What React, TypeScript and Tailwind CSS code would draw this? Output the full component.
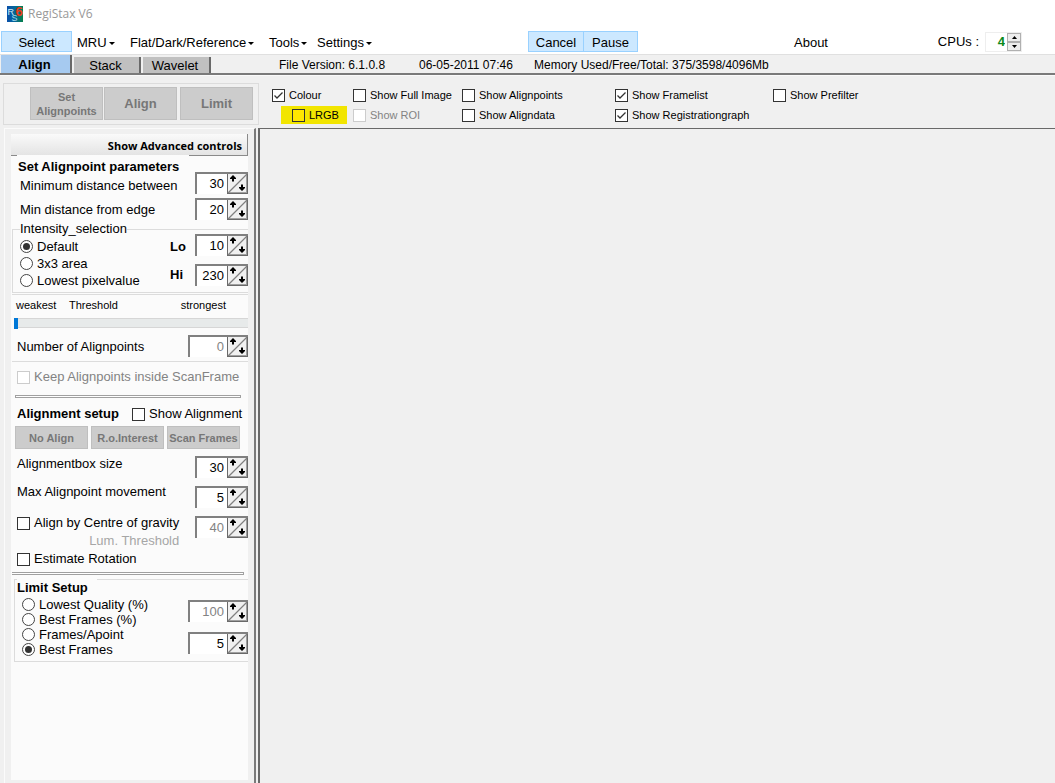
import React, { useId } from "react";

const cx = (...parts: (string | undefined | false)[]) => parts.filter(Boolean).join(" ");

function Logo() {
  return (
    <svg width="16" height="16" viewBox="0 0 16 16" aria-hidden="true">
      <defs>
        <linearGradient id="logo-bg" x1="0" x2="1" y1="0" y2="0">
          <stop offset="0" stopColor="#0a4fa8" />
          <stop offset="0.5" stopColor="#04689a" />
          <stop offset="1" stopColor="#068048" />
        </linearGradient>
      </defs>
      <rect width="16" height="16" fill="url(#logo-bg)" />
      <g fontFamily="Liberation Sans, sans-serif">
        <text x="0.5" y="9" fontSize="9" fill="#d6ecf5">R</text>
        <text x="4.5" y="15" fontSize="9" fill="#a9dcec">S</text>
        <text x="8.500" y="10" fontSize="13" fontWeight="bold" fill="#f03a18">6</text>
      </g>
    </svg>
  );
}

function Caret() {
  return (
    <svg width="6" height="3" viewBox="0 0 6 3" aria-hidden="true">
      <path d="M0 0h6L3 3z" fill="#000" />
    </svg>
  );
}

function MenuButton({ children, caret, className }: { children: React.ReactNode; caret?: boolean; className?: string }) {
  return (
    <button className={cx("flex h-5 shrink-0 items-center gap-[2px] whitespace-nowrap", className)}>
      {children}
      {caret && <Caret />}
    </button>
  );
}

function BlueButton({ children, className }: { children: React.ReactNode; className: string }) {
  return (
    <button className={cx("h-[21px] shrink-0 border border-[#99d1ff] bg-[#cce8ff] pt-[2px]", className)}>{children}</button>
  );
}

type CheckProps = {
  label: string;
  checked?: boolean;
  disabled?: boolean;
  yellow?: boolean;
  className?: string;
};

function Check({ label, checked, disabled, yellow, className }: CheckProps) {
  return (
    <label className={cx("flex items-center gap-1 whitespace-nowrap", disabled && "text-[#838383]", className)}>
      <span className="grid shrink-0">
        <input
          type="checkbox"
          defaultChecked={checked}
          disabled={disabled}
          className={cx(
            "peer col-start-1 row-start-1 size-[13px] appearance-none border",
            disabled ? "border-[#cccccc]" : "border-[#333333]",
            yellow ? "bg-[#ffe600]" : "bg-white",
          )}
        />
        <svg
          className="pointer-events-none col-start-1 row-start-1 hidden peer-checked:block"
          width="13"
          height="13"
          viewBox="0 0 13 13"
          aria-hidden="true"
        >
          <path d="M2.500 6.500L5 9L10.500 3.500" fill="none" stroke="#333" strokeWidth="1.300" />
        </svg>
      </span>
      {label}
    </label>
  );
}

function Radio({ name, label, checked, className }: { name: string; label: string; checked?: boolean; className: string }) {
  return (
    <label className={cx("flex items-center gap-1 whitespace-nowrap", className)}>
      <input
        type="radio"
        name={name}
        defaultChecked={checked}
        className="grid size-[13px] shrink-0 appearance-none place-items-center rounded-full border border-[#444444] bg-white before:hidden before:size-[7px] before:rounded-full before:bg-[#333333] checked:before:block"
      />
      {label}
    </label>
  );
}

type SpinProps = { id?: string; label?: string; value: number; disabled?: boolean; wide?: boolean };

function Spin({ id, label, value, disabled, wide }: SpinProps) {
  return (
    <span
      className={cx(
        "flex h-[22px] shrink-0 border-t-2 border-l-2 border-[#808080] bg-white",
        wide ? "w-[60px]" : "w-[53px]",
      )}
    >
      <input
        id={id}
        aria-label={label}
        type="text"
        defaultValue={value}
        disabled={disabled}
        className={cx("h-[18px] w-0 min-w-0 flex-1 bg-white pr-[3px] text-right outline-none", disabled ? "text-[#838383]" : "text-black")}
      />
      <span className="relative flex h-5 w-[21px] shrink-0 bg-[#f0f0f0]">
        <svg className="pointer-events-none absolute inset-0" width="21" height="20" viewBox="0 0 21 20" aria-hidden="true">
          <path d="M0.500 0V20" stroke="#696969" />
          <path d="M19.500 0V19M1 18.500H20" stroke="#a0a0a0" />
          <path d="M20.500 0V20M1 19.500H21" stroke="#696969" />
          <path d="M1 19L20 0" stroke="#808080" strokeWidth="1.200" />
          <path d="M6 1L9 4V5H7V7.500H5V5H3V4z" fill="#000" />
          <path d="M15 17L18 14V13H16V10.500H14V13H12V14z" fill="#000" />
        </svg>
        <button aria-label="Increase" className="flex-1" />
        <button aria-label="Decrease" className="flex-1" />
      </span>
    </span>
  );
}

function SpinRow({ label, value, className, labelClass }: { label: string; value: number; className: string; labelClass?: string }) {
  const id = useId();
  return (
    <div className={cx("flex items-start justify-between", className)}>
      <label htmlFor={id} className={cx("whitespace-nowrap leading-4", labelClass)}>
        {label}
      </label>
      <Spin id={id} value={value} />
    </div>
  );
}

function GreyButton({ children, className }: { children: React.ReactNode; className: string }) {
  return (
    <button disabled className={cx("shrink-0 whitespace-nowrap border border-[#bfbfbf] bg-[#cccccc] font-bold text-[#777777]", className)}>
      {children}
    </button>
  );
}

function DoubleRule({ className }: { className: string }) {
  return <div className={cx("h-[3px] border-y border-r border-[#a0a0a0] bg-white", className)} />;
}

function TopBar() {
  return (
    <header className="bg-white">
      <div className="flex h-[29px] items-center gap-[5px] pb-[2px] pl-[7px] font-['Open_Sans',sans-serif] text-[12px] text-[#999999]">
        <Logo />
        <h1>RegiStax V6</h1>
      </div>
      <nav className="flex h-[26px] items-start border-b border-[#e0e0e0] pl-px pt-[2px]">
        <BlueButton className="w-[71px]">Select</BlueButton>
        <div className="flex w-[456px] shrink-0 pl-[5px] pt-[2px]">
          <MenuButton caret className="w-[53px]">MRU</MenuButton>
          <MenuButton caret className="w-[139px]">Flat/Dark/Reference</MenuButton>
          <MenuButton caret className="w-[48px]">Tools</MenuButton>
          <MenuButton caret>Settings</MenuButton>
        </div>
        <BlueButton className="w-14">Cancel</BlueButton>
        <BlueButton className="-ml-px w-[55px]">Pause</BlueButton>
        <MenuButton className="ml-[156px] mt-[2px]">About</MenuButton>
        <div className="ml-auto mr-[33px] mt-px flex shrink-0 items-center gap-[6px]">
          <label htmlFor="cpus">CPUs :</label>
          <span className="flex h-5 w-[37px] border border-[#eeeeee] bg-white">
            <input id="cpus" type="text" defaultValue="4" className="w-0 flex-1 pr-[2px] text-right font-bold text-[#0a8a1a] outline-none" />
            <span className="flex w-[14px] flex-col">
              <button aria-label="More CPUs" className="grid flex-1 place-items-center border border-[#b0b0b0] bg-[#eeeeee]">
                <svg width="5" height="3" viewBox="0 0 5 3"><path d="M0 3h5L2.500 0z" /></svg>
              </button>
              <button aria-label="Fewer CPUs" className="grid flex-1 place-items-center border border-[#b0b0b0] bg-[#eeeeee]">
                <svg width="5" height="3" viewBox="0 0 5 3"><path d="M0 0h5L2.500 3z" /></svg>
              </button>
            </span>
          </span>
        </div>
      </nav>
    </header>
  );
}

function TabStrip() {
  return (
    <div className="flex h-5 items-end gap-[2px] border-b-2 border-[#7a7a7a] pl-px">
      <button className="h-[18px] w-[71px] shrink-0 border-r-2 border-[#696969] bg-[#a6caf0] pr-[2px] pt-px font-bold">Align</button>
      <button className="h-4 w-[67px] shrink-0 border-r-2 border-[#696969] bg-[#c0c0c0] pr-[2px] pt-[2px] leading-[14px]">Stack</button>
      <button className="h-4 w-[68px] shrink-0 border-r-2 border-[#696969] bg-[#c0c0c0] pr-[2px] pt-[2px] leading-[14px]">Wavelet</button>
      <div className="flex h-4 items-center whitespace-nowrap pl-[66px] text-xs">
        <span className="w-[140px]">File Version: 6.1.0.8</span>
        <span className="w-[115px]">06-05-2011 07:46</span>
        <span>Memory Used/Free/Total: 375/3598/4096Mb</span>
      </div>
    </div>
  );
}

function Toolbar() {
  return (
    <div className="flex h-[53px] items-start border-t border-[#fafafa] pl-[3px]">
      <div className="mt-[7px] flex h-[42px] w-[256px] shrink-0 items-start border border-[#dcdcdc] pl-[26px] pt-[3px]">
        <GreyButton className="h-[33px] w-[73px] text-[11px] leading-[14px]">
          Set
          <br />
          Alignpoints
        </GreyButton>
        <GreyButton className="ml-px h-[33px] w-[73px]">Align</GreyButton>
        <GreyButton className="ml-[3px] h-[33px] w-[73px]">Limit</GreyButton>
      </div>
      <div className="ml-[13px] mt-[9px] grid grid-cols-[81px_109px_153px_158px_auto] grid-rows-[20px_20px] items-center text-[11px]">
        <Check label="Colour" checked />
        <Check label="Show Full Image" />
        <Check label="Show Alignpoints" />
        <Check label="Show Framelist" checked />
        <Check label="Show Prefilter" />
        <Check label="LRGB" yellow className="ml-[9px] h-[18px] w-[66px] bg-[#f2e500] pl-[11px]" />
        <Check label="Show ROI" disabled />
        <Check label="Show Aligndata" />
        <Check label="Show Registrationgraph" checked />
      </div>
    </div>
  );
}

function IntensityGroup() {
  return (
    <fieldset className="ml-px h-[72px] border border-r-0 border-[#dcdcdc] pl-[7px]">
      <legend className="leading-4">Intensity_selection</legend>
      <div className="-mt-[3px] flex justify-between">
        <div className="pt-[4px]">
          <Radio name="intensity" label="Default" checked className="h-[17px]" />
          <Radio name="intensity" label="3x3 area" className="h-[17px]" />
          <Radio name="intensity" label="Lowest pixelvalue" className="h-[17px]" />
        </div>
        <div className="w-[78px]">
          <SpinRow label="Lo" value={10} labelClass="pt-[5px] font-bold" className="h-[30px]" />
          <SpinRow label="Hi" value={230} labelClass="pt-[3px] font-bold" className="h-[22px]" />
        </div>
      </div>
    </fieldset>
  );
}

function LimitGroup() {
  return (
    <fieldset className="ml-[3px] mt-[4px] h-[83px] border border-r-0 border-[#dcdcdc]">
      <legend className="float-left -mt-px ml-[2px] w-[80px] bg-[#fbfbfb] pt-px font-bold leading-4">Limit Setup</legend>
      <div className="clear-left flex justify-between pl-[7px]">
        <div className="pt-px">
          <Radio name="limit" label="Lowest Quality (%)" className="h-[15px]" />
          <Radio name="limit" label="Best Frames (%)" className="h-[15px]" />
          <Radio name="limit" label="Frames/Apoint" className="h-[15px]" />
          <Radio name="limit" label="Best Frames" checked className="h-[15px]" />
        </div>
        <div className="flex flex-col gap-[10px] pt-[4px]">
          <Spin label="Percentage" value={100} disabled wide />
          <Spin label="Frame count" value={5} wide />
        </div>
      </div>
    </fieldset>
  );
}

function Sidebar() {
  return (
    <aside className="flex w-[252px] shrink-0 border-l border-t border-[#fbfbfb] border-r-2 border-r-[#7a7a7a] pl-[6px] pr-[6px] pt-[5px] pb-[3px]">
      <div className="flex w-full flex-col bg-[#fbfbfb]">
        <button className="h-[22px] shrink-0 border-b border-r border-[#8a8a8a] bg-gradient-to-b from-[#fafafa] to-[#e4e4e4] pr-[5px] pt-[3px] text-right font-['Open_Sans',sans-serif] text-[11px] font-bold leading-[18px]">
          Show Advanced controls
        </button>
        <h2 className="relative -mt-px ml-[6px] w-[172px] whitespace-nowrap bg-[#fbfbfb] pl-px pt-[4px] font-bold leading-4">
          Set Alignpoint parameters
        </h2>
        <SpinRow label="Minimum distance between" value={30} className="-mt-[3px] h-[26px] pl-[9px]" labelClass="pt-[6px]" />
        <SpinRow label="Min distance from edge" value={20} className="h-[23px] pl-[9px]" labelClass="pt-[4px]" />
        <IntensityGroup />
        <div className="ml-px mt-px h-px bg-[#dcdcdc]" />
        <div className="mt-[2px] flex pl-[5px] pr-[22px] text-[11px] leading-4">
          <span className="w-[53px]">weakest</span>
          <label htmlFor="threshold">Threshold</label>
          <span className="ml-auto">strongest</span>
        </div>
        <input
          id="threshold"
          type="range"
          defaultValue={0}
          className="ml-[3px] mt-[5px] h-[10px] appearance-none border-y border-[#d6d6d6] bg-[#e7eaea] [&::-webkit-slider-thumb]:h-[11px] [&::-webkit-slider-thumb]:w-1 [&::-webkit-slider-thumb]:appearance-none [&::-webkit-slider-thumb]:bg-[#0078d7]"
        />
        <div className="mt-[7px] flex items-center justify-between pl-[6px]">
          <label htmlFor="count" className="pt-[2px]">Number of Alignpoints</label>
          <Spin id="count" value={0} disabled wide />
        </div>
        <div className="ml-px mt-[4px] h-px bg-[#dcdcdc]" />
        <Check label="Keep Alignpoints inside ScanFrame" disabled className="mt-[7px] h-4 pl-[6px]" />
        <DoubleRule className="ml-[4px] mr-[7px] mt-[10px] border-l" />
        <div className="mt-[8px] flex h-4 items-center pl-[6px]">
          <h2 className="w-[115px] font-bold">Alignment setup</h2>
          <Check label="Show Alignment" />
        </div>
        <div className="mt-[4px] flex gap-[3px] pl-[4px] text-[11px]">
          <GreyButton className="h-[23px] w-[73px]">No Align</GreyButton>
          <GreyButton className="h-[23px] w-[73px]">R.o.Interest</GreyButton>
          <GreyButton className="h-[23px] w-[73px]">Scan Frames</GreyButton>
        </div>
        <SpinRow label="Alignmentbox size" value={30} className="mt-[7px] h-[30px] pl-[6px]" />
        <SpinRow label="Max Alignpoint movement" value={5} className="h-[30px] pl-[6px]" labelClass="-mt-[2px]" />
        <div className="flex h-[34px] items-start justify-between pl-[6px]">
          <div className="-mt-px">
            <Check label="Align by Centre of gravity" className="h-4" />
            <p className="text-right leading-5 text-[#a6a6a6]">Lum. Threshold</p>
          </div>
          <Spin label="Lum. Threshold" value={40} disabled />
        </div>
        <Check label="Estimate Rotation" className="mt-px h-4 pl-[6px]" />
        <DoubleRule className="ml-px mr-[4px] mt-[5px]" />
        <LimitGroup />
      </div>
    </aside>
  );
}

export default function App() {
  return (
    <div className="flex min-h-screen flex-col bg-[#f0f0f0] font-['Liberation_Sans',Arial,sans-serif] text-[13px] leading-4 text-black">
      <TopBar />
      <TabStrip />
      <Toolbar />
      <div className="flex flex-1 pl-1">
        <Sidebar />
        <main className="ml-[2px] flex-1 border-l-2 border-t border-[#696969]" />
      </div>
    </div>
  );
}
